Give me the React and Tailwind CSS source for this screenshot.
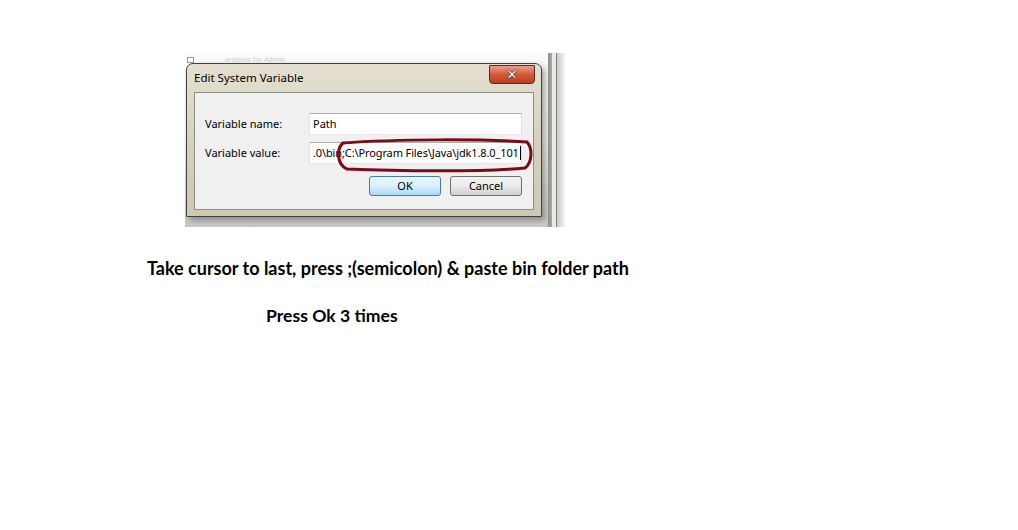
export default function App() {
  const ui = { fontFamily: '"Noto Sans", "Liberation Sans", sans-serif' };
  const note = { fontFamily: 'Lato, "Open Sans", sans-serif' };

  return (
    <div className="w-[1018px] h-[530px] bg-white overflow-hidden">
      <div className="pt-[53px] pl-[185px]">
        {/* pasted screenshot of the dialog */}
        <div className="w-[380px] h-[174px] flex bg-[#efefef]">
          <div className="w-[363px] flex flex-col bg-gradient-to-b from-[#fbfbfb] via-[#f1f1f1] to-[#c8c8c8]">
            <div className="h-[10px] relative overflow-hidden">
              <div className="absolute left-[2px] top-[4px] w-[7px] h-[6px] bg-white border border-[#9a9a9a]"></div>
              <span className="block ml-[40px] mt-[3px] text-[7px] leading-[7px] text-[#cdcdcd]" style={ui}>
                ariables for Admin
              </span>
            </div>
            <div className="ml-[1px] w-[356px] h-[154px] rounded-t-[7px] border border-[#414141] bg-gradient-to-b from-[#e4e0d2] via-[#d6d1bd] to-[#cfc9b2] shadow-[3px_3px_6px_rgba(0,0,0,0.35)] flex flex-col px-[7px] pb-[6px]">
              <div className="h-[28px] flex items-start justify-between">
                <span className="pt-[7px] text-[11.5px] leading-[14px] text-black" style={ui}>
                  Edit System Variable
                </span>
                <div className="mt-[1px] mr-[-1px] w-[46px] h-[19px] rounded-b-[4px] border border-[#5c2a20] bg-gradient-to-b from-[#e7a08b] via-[#d35a3b] to-[#c33a1c] flex items-center justify-center">
                  <span className="text-white font-bold text-[13px] leading-none [text-shadow:0_0_1px_#222,0_0_1px_#222,0_0_1px_#222]" style={{ fontFamily: '"DejaVu Sans", sans-serif' }}>
                    ✕
                  </span>
                </div>
              </div>
              <div className="flex-1 border border-[#8e8e86] bg-[#f0f0f0] relative pt-[20px] pl-[10px] pr-[11px]" style={ui}>
                <div className="flex items-center h-[22px] text-[11px] text-black">
                  <span className="w-[104px]">Variable name:</span>
                  <div className="flex-1 h-[22px] bg-white border border-[#abadb3] border-l-[#e2e3ea] border-r-[#dbdfe6] border-b-[#e3e9ef] pl-[3px] leading-[20px]">
                    Path
                  </div>
                </div>
                <div className="flex items-center h-[22px] mt-[7px] text-[11px] text-black">
                  <span className="w-[104px]">Variable value:</span>
                  <div className="flex-1 h-[22px] bg-white border border-[#abadb3] border-l-[#e2e3ea] border-r-[#dbdfe6] border-b-[#e3e9ef] pl-[3px] leading-[20px] whitespace-nowrap flex items-center">
                    <span className="tracking-[-0.12px]">.0\bin;C:\Program Files\Java\jdk1.8.0_101</span>
                    <span className="ml-[1px] w-px h-[14px] bg-black"></span>
                  </div>
                </div>
                <div className="flex justify-end gap-[9px] mt-[12px] text-[11px] text-black">
                  <button className="w-[72px] h-[20px] rounded-[3px] border border-[#3c7fb1] bg-gradient-to-b from-[#eaf6fd] via-[#d9f0fc] to-[#a7d9f5] leading-[18px]">
                    OK
                  </button>
                  <button className="w-[72px] h-[20px] rounded-[3px] border border-[#707070] bg-gradient-to-b from-[#f2f2f2] via-[#ebebeb] to-[#cfcfcf] leading-[18px]">
                    Cancel
                  </button>
                </div>
                {/* red marker ellipse drawn over the value field */}
                <svg className="absolute left-[140px] top-[44px]" width="200" height="36" viewBox="0 0 200 36">
                  <path
                    d="M8 6 C 60 2, 150 2, 192 5 C 198 12, 197 26, 190 31 C 150 35, 60 34, 12 32 C 2 28, 1 12, 8 6 Z"
                    fill="none"
                    stroke="#7d0a18"
                    strokeWidth="3"
                  />
                </svg>
              </div>
            </div>
          </div>
          <div className="w-[17px] flex">
            <div className="w-[4px] bg-gradient-to-r from-[#8d8d8d] to-[#a9a9a9]"></div>
            <div className="w-[4px] bg-[#ecebdc]"></div>
            <div className="w-px bg-[#7f7f7f]"></div>
            <div className="flex-1 bg-gradient-to-r from-[#c9c9c9] to-[#f4f4f4]"></div>
          </div>
        </div>
      </div>
      <p className="mt-[31px] pl-[147px] text-[18px] leading-[20px] font-bold text-black" style={note}>
        Take cursor to last, press ;(semicolon) &amp; paste bin folder path
      </p>
      <p className="mt-[28px] pl-[266px] text-[17.6px] leading-[20px] font-bold text-black" style={note}>
        Press Ok 3 times
      </p>
    </div>
  );
}
